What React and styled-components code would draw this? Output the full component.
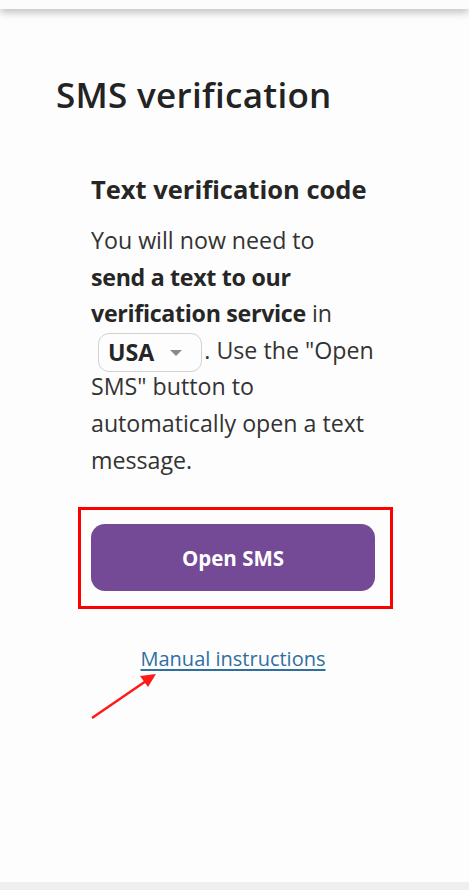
import React from "react";
import styled, { createGlobalStyle } from "styled-components";

const GlobalStyle = createGlobalStyle`
  html, body {
    margin: 0;
    padding: 0;
    background: #fdfdfd;
  }
  body {
    font-family: "Open Sans", "Liberation Sans", sans-serif;
    color: #2b2b2b;
  }
  * {
    box-sizing: border-box;
  }
`;

const Page = styled.div`
  position: relative;
  width: 469px;
  height: 890px;
  display: flex;
  flex-direction: column;
  background: #fdfdfd;
  overflow: hidden;
`;

const TopBar = styled.div`
  height: 9px;
  background: #fcfcfc;
  box-shadow: 0 3px 8px rgba(0, 0, 0, 0.28);
  position: relative;
  z-index: 1;
`;

const Main = styled.main`
  flex: 1;
  padding: 62px 0 0 56px;
`;

const Title = styled.h1`
  margin: 0;
  font-size: 35px;
  font-weight: 600;
  letter-spacing: 0.3px;
  color: #232323;
`;

const Section = styled.section`
  margin: 54px 0 0 35px;
  width: 284px;
`;

const SubTitle = styled.h2`
  margin: 0;
  font-size: 25.5px;
  font-weight: 700;
  color: #262626;
`;

const Text = styled.p`
  margin: 16px 0 0;
  font-size: 23.2px;
  line-height: 36.6px;
  color: #333;

  strong {
    font-weight: 700;
    letter-spacing: -0.3px;
    color: #262626;
  }
`;

const Select = styled.span`
  display: inline-flex;
  align-items: center;
  gap: 16px;
  height: 39px;
  margin: -4px 2px -4px 7px;
  padding: 0 19px 0 9px;
  border: 1.5px solid #d2d2d2;
  border-radius: 11px;
  vertical-align: middle;
  font-weight: 700;
  color: #262626;
  line-height: 1;

  &::after {
    content: "";
    border-left: 6px solid transparent;
    border-right: 6px solid transparent;
    border-top: 6px solid #8a8a8a;
  }
`;

const Highlight = styled.div`
  margin: 29px 0 0 -13px;
  width: 315px;
  padding: 14px 15px 15px 10px;
  border: 3px solid #ff0000;
`;

const Button = styled.button`
  display: block;
  width: 284px;
  height: 67px;
  border: none;
  border-radius: 14px;
  background: #744995;
  color: #fff;
  font-family: inherit;
  font-size: 20.5px;
  font-weight: 700;
  cursor: pointer;
`;

const LinkRow = styled.div`
  display: flex;
  justify-content: center;
  margin-top: 36px;
  width: 284px;
`;

const Link = styled.a`
  font-size: 20px;
  color: #2f6f9e;
  text-decoration: underline;
  text-underline-offset: 3px;
  text-decoration-thickness: 1.5px;
`;

const Arrow = styled.svg`
  position: absolute;
  left: 88px;
  top: 668px;
`;

const BottomBar = styled.div`
  height: 8px;
  background: #efefef;
`;

export default function App() {
  return (
    <Page>
      <GlobalStyle />
      <TopBar />
      <Main>
        <Title>SMS verification</Title>
        <Section>
          <SubTitle>Text verification code</SubTitle>
          <Text>
            You will now need to
            <br />
            <strong>send a text to our</strong>
            <br />
            <strong>verification service</strong> in
            <br />
            <Select>USA</Select>. Use the "Open
            <br />
            SMS" button to
            <br />
            automatically open a text
            <br />
            message.
          </Text>
          <Highlight>
            <Button>Open SMS</Button>
          </Highlight>
          <LinkRow>
            <Link href="#">Manual instructions</Link>
          </LinkRow>
        </Section>
      </Main>
      <BottomBar />
      <Arrow width="72" height="54" viewBox="0 0 72 54">
        <line x1="4" y1="50" x2="58" y2="13" stroke="#ff1a1a" strokeWidth="2.5" />
        <polygon points="68,6 52,8 60,19" fill="#ff1a1a" />
      </Arrow>
    </Page>
  );
}
